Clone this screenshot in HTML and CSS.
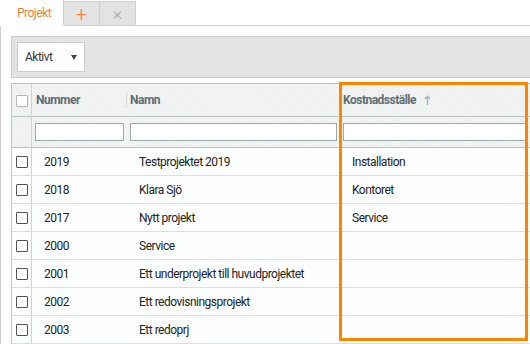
FILE: index.html
```html
<!DOCTYPE html>
<html lang="sv">
<head>
  <meta charset="UTF-8" />
  <meta name="viewport" content="width=device-width, initial-scale=1" />
  <title>Projekt</title>
  <link rel="stylesheet" href="styles.css">
</head>
<body>
  <div class="tabs">
    <div class="tab active">Projekt</div>
    <div class="tab add">+</div>
    <div class="tab close">&times;</div>
    <div class="tab-fill"></div>
  </div>

  <div class="page">
    <div class="toolbar">
      <div class="select">
        <span>Aktivt</span>
        <span class="caret"></span>
      </div>
    </div>

    <div class="grid-wrap">
      <table class="grid">
        <colgroup>
          <col class="c-check">
          <col class="c-num">
          <col class="c-name">
          <col class="c-cost">
        </colgroup>
        <thead>
          <tr class="head">
            <th class="check"><span class="box light"></span></th>
            <th class="num"><div class="th-inner">Nummer</div></th>
            <th class="name"><div class="th-inner">Namn</div></th>
            <th class="cost">
              <div class="th-inner">Kostnadsställe
                <svg class="sort" width="7" height="10" viewBox="0 0 7 10"><path d="M3.5 10V1.5M1 4L3.5 1.2 6 4" fill="none" stroke="#a7b6bd" stroke-width="1.3"/></svg>
              </div>
            </th>
          </tr>
          <tr class="filters">
            <th class="check"></th>
            <th><input type="text"></th>
            <th><input type="text"></th>
            <th><input type="text"></th>
          </tr>
        </thead>
        <tbody>
          <tr><td class="check"><span class="box"></span></td><td class="num">2019</td><td class="name">Testprojektet 2019</td><td class="cost">Installation</td></tr>
          <tr><td class="check"><span class="box"></span></td><td class="num">2018</td><td class="name">Klara Sjö</td><td class="cost">Kontoret</td></tr>
          <tr><td class="check"><span class="box"></span></td><td class="num">2017</td><td class="name">Nytt projekt</td><td class="cost">Service</td></tr>
          <tr><td class="check"><span class="box"></span></td><td class="num">2000</td><td class="name">Service</td><td class="cost"></td></tr>
          <tr><td class="check"><span class="box"></span></td><td class="num">2001</td><td class="name">Ett underprojekt till huvudprojektet</td><td class="cost"></td></tr>
          <tr><td class="check"><span class="box"></span></td><td class="num">2002</td><td class="name">Ett redovisningsprojekt</td><td class="cost"></td></tr>
          <tr><td class="check"><span class="box"></span></td><td class="num">2003</td><td class="name">Ett redoprj</td><td class="cost"></td></tr>
        </tbody>
      </table>
      <div class="highlight"></div>
    </div>
  </div>
</body>
</html>
```

FILE: styles.css
```css
html, body {
  height: 344px;
  overflow: hidden;
}
body {
  margin: 0;
  font-family: Roboto, "Liberation Sans", sans-serif;
  font-size: 12px;
  letter-spacing: -0.5px;
  color: #222;
  background: #fff;
  width: 530px;
}
.tabs {
  display: flex;
  height: 26px;
}
.tab {
  box-sizing: border-box;
  height: 26px;
  display: flex;
  align-items: center;
  justify-content: center;
  border-right: 1px solid #cfcfcf;
  border-bottom: 1px solid #cfcfcf;
}
.tab.active {
  width: 64px;
  justify-content: flex-start;
  padding-left: 17px;
  color: #f2803a;
  background: #fff;
  border-bottom-color: #fff;
}
.tab.add,
.tab.close {
  width: 36px;
  margin-top: 1px;
  height: 25px;
  border-top: 1px solid #cfcfcf;
  background: #e3e3e3;
  font-size: 20px;
  font-weight: 300;
  letter-spacing: 0;
}
.tab.add {
  color: #f2803a;
}
.tab.close {
  color: #a8a8a8;
  font-size: 19px;
}
.tab-fill {
  flex: 1;
  border-bottom: 1px solid #cfcfcf;
}
.page {
  border-left: 1px solid #cfcfcf;
  padding: 10px 0 0 10px;
  height: 308px;
  overflow: hidden;
}
.toolbar {
  height: 30px;
  padding: 5px;
  background: #e3e3e3;
  border: 1px solid #cccccc;
  border-right: none;
}
.select {
  box-sizing: border-box;
  width: 68px;
  height: 30px;
  background: #fff;
  border: 1px solid #cccccc;
  display: flex;
  align-items: center;
  justify-content: space-between;
  padding: 0 7px 0 7px;
  color: #333;
}
.caret {
  width: 0;
  height: 0;
  border-left: 3.5px solid transparent;
  border-right: 3.5px solid transparent;
  border-top: 5px solid #444;
  margin-top: 1px;
}
.grid-wrap {
  position: relative;
  margin-top: 5px;
}
.grid {
  table-layout: fixed;
  width: 519px;
  border-collapse: separate;
  border-spacing: 0;
  border-top: 1px solid #b9c4c6;
  border-left: 1px solid #c4cacb;
}
.c-check { width: 20px; }
.c-num { width: 95px; }
.c-name { width: 213px; }
.c-cost { width: 190px; }
th, td {
  padding: 0;
  text-align: left;
  vertical-align: middle;
}
thead th {
  background-color: #f2f4f4;
  background-image: repeating-linear-gradient(45deg, rgba(0,0,0,0.018) 0 1px, transparent 1px 3px);
}
.head th {
  height: 32px;
  border-bottom: 1px solid #b9c4c6;
  font-weight: bold;
  color: #5e6d75;
}
.head .num { padding-left: 4px; }
.head .name,
.head .cost { padding-left: 3px; }
.th-inner {
  line-height: 16px;
}
.head .num .th-inner {
  border-right: 1px solid #dcdfe0;
}
.sort {
  margin-left: 5px;
  vertical-align: -1px;
}
.filters th {
  height: 30px;
  padding: 0 3px;
  border-bottom: 1px solid #b9c4c6;
}
.filters th.check {
  padding: 0;
}
.filters input {
  box-sizing: border-box;
  display: block;
  width: 100%;
  height: 18px;
  margin: 0;
  border: 1px solid #9ea9ac;
  background: #fff;
  padding: 0 3px;
}
th.check,
td.check {
  border-right: 1px solid #cfd4d5;
  text-align: center;
}
td {
  height: 27px;
  border-bottom: 1px solid #dddddd;
  background: #fcfefe;
}
td.num,
td.name,
td.cost {
  padding-left: 12px;
}
.box {
  display: inline-block;
  box-sizing: border-box;
  width: 12px;
  height: 12px;
  border: 1px solid #555;
  border-radius: 1px;
  background: #fff;
  vertical-align: middle;
}
.box.light {
  border-color: #b4b4b4;
}
.highlight {
  position: absolute;
  left: 328px;
  top: -1px;
  width: 183px;
  height: 253px;
  border: 3px solid #ff8400;
  pointer-events: none;
}
```
